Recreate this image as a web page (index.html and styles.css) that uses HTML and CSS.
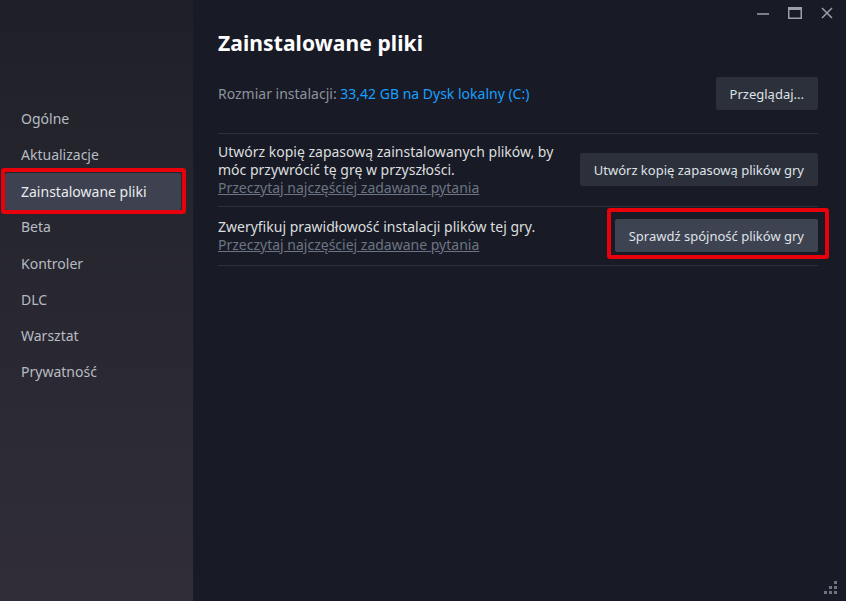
FILE: index.html
```html
<!DOCTYPE html>
<html lang="pl">
<head>
<meta charset="utf-8">
<link rel="stylesheet" href="styles.css">
</head>
<body>
<div class="window">
  <nav class="sidebar">
    <a class="nav-item">Ogólne</a>
    <a class="nav-item">Aktualizacje</a>
    <a class="nav-item active">Zainstalowane pliki<span class="mark mark-nav"></span></a>
    <a class="nav-item">Beta</a>
    <a class="nav-item">Kontroler</a>
    <a class="nav-item">DLC</a>
    <a class="nav-item">Warsztat</a>
    <a class="nav-item">Prywatność</a>
  </nav>
  <main class="main">
    <div class="titlebar">
      <svg class="ctl" width="16" height="16" viewBox="0 0 16 16"><path d="M2 9h12" stroke="#9aa0a8" stroke-width="1.5"/></svg>
      <svg class="ctl" width="16" height="16" viewBox="0 0 16 16"><rect x="1.75" y="2.75" width="12.5" height="10.5" fill="none" stroke="#9aa0a8" stroke-width="1.5"/><path d="M1.75 4h12.5" stroke="#9aa0a8" stroke-width="2"/></svg>
      <svg class="ctl" width="16" height="16" viewBox="0 0 16 16"><path d="M3 3l10 10M13 3L3 13" stroke="#9aa0a8" stroke-width="1.5"/></svg>
    </div>
    <h1 class="title">Zainstalowane pliki</h1>
    <div class="size-row">
      <div class="size-text">Rozmiar instalacji: <span class="size-value">33,42 GB na Dysk lokalny (C:)</span></div>
      <button class="btn">Przeglądaj...</button>
    </div>
    <div class="rows">
      <div class="row row-first">
        <div class="row-text">
          <div class="desc">Utwórz kopię zapasową zainstalowanych plików, by<br>móc przywrócić tę grę w przyszłości.</div>
          <a class="faq">Przeczytaj najczęściej zadawane pytania</a>
        </div>
        <button class="btn">Utwórz kopię zapasową plików gry</button>
      </div>
      <div class="row">
        <div class="row-text">
          <div class="desc">Zweryfikuj prawidłowość instalacji plików tej gry.</div>
          <a class="faq">Przeczytaj najczęściej zadawane pytania</a>
        </div>
        <button class="btn btn-light">Sprawdź spójność plików gry<span class="mark mark-btn"></span></button>
      </div>
    </div>
    <svg class="grip" width="14" height="14" viewBox="0 0 14 14">
      <g fill="#6d7380">
        <rect x="10" y="0" width="3" height="3"/>
        <rect x="5" y="5" width="3" height="3"/><rect x="10" y="5" width="3" height="3"/>
        <rect x="0" y="10" width="3" height="3"/><rect x="5" y="10" width="3" height="3"/><rect x="10" y="10" width="3" height="3"/>
      </g>
    </svg>
  </main>
</div>
</body>
</html>
```

FILE: styles.css
```css
* { box-sizing: border-box; }
html, body { margin: 0; padding: 0; }
body {
  width: 846px;
  height: 601px;
  overflow: hidden;
  background: #181b25;
  font-family: "Noto Sans", "Open Sans", sans-serif;
  color: #dcdedf;
}
.window {
  display: flex;
  height: 601px;
}
.sidebar {
  width: 194px;
  flex: none;
  background: linear-gradient(180deg, #1e1f27 0%, #26262f 35%, #302d38 100%);
  display: flex;
  flex-direction: column;
  padding: 101px 12px 0 5px;
  border-right: 1px solid #1a1c24;
}
.nav-item {
  position: relative;
  display: block;
  height: 36.2px;
  line-height: 36px;
  padding-left: 16px;
  font-size: 14px;
  color: #b7bbc2;
  border-radius: 2px;
}
.nav-item.active {
  background: #3d4150;
  color: #e9ebee;
  height: 37px;
  line-height: 37px;
  margin-bottom: -1px;
}
.mark {
  position: absolute;
  border: 4px solid #e8000b;
  border-radius: 3px;
  pointer-events: none;
}
.mark-nav { left: -4px; top: -5px; right: -5px; bottom: -4px; }
.mark-btn { left: -8px; top: -11px; right: -11px; bottom: -7px; }
.main {
  position: relative;
  flex: 1;
  padding: 0 28px 0 24px;
  background: #181b26;
}
.titlebar {
  display: flex;
  justify-content: flex-end;
  gap: 16px;
  padding-top: 5px;
  margin-right: -17px;
  height: 22px;
}
.ctl { display: block; }
.title {
  margin: 6px 0 0 0;
  font-size: 21px;
  font-weight: 700;
  color: #ffffff;
  letter-spacing: 0.1px;
  line-height: 30px;
}
.size-row {
  display: flex;
  justify-content: space-between;
  align-items: center;
  margin-top: 19px;
  padding-bottom: 23px;
  border-bottom: 1px solid #2c303b;
}
.size-text {
  font-size: 14px;
  color: #8d939c;
}
.size-value { color: #1a9fff; }
.btn {
  position: relative;
  font-family: inherit;
  font-size: 13px;
  color: #dfe2e6;
  background: #2c303b;
  border: none;
  border-radius: 2px;
  height: 33px;
  padding: 0 14px;
  cursor: pointer;
}
.btn-light { background: #3e4351; }
.row {
  display: flex;
  justify-content: space-between;
  align-items: center;
  border-bottom: 1px solid #2c303b;
  padding: 11px 0 12px;
}
.row.row-first { padding: 9px 0 10px; }
.desc {
  font-size: 14px;
  line-height: 18px;
  color: #dcdedf;
}
.faq {
  display: block;
  font-size: 14px;
  line-height: 17px;
  color: #6c7483;
  text-decoration: underline;
}
.grip {
  position: absolute;
  right: 8px;
  bottom: 6px;
}
```
